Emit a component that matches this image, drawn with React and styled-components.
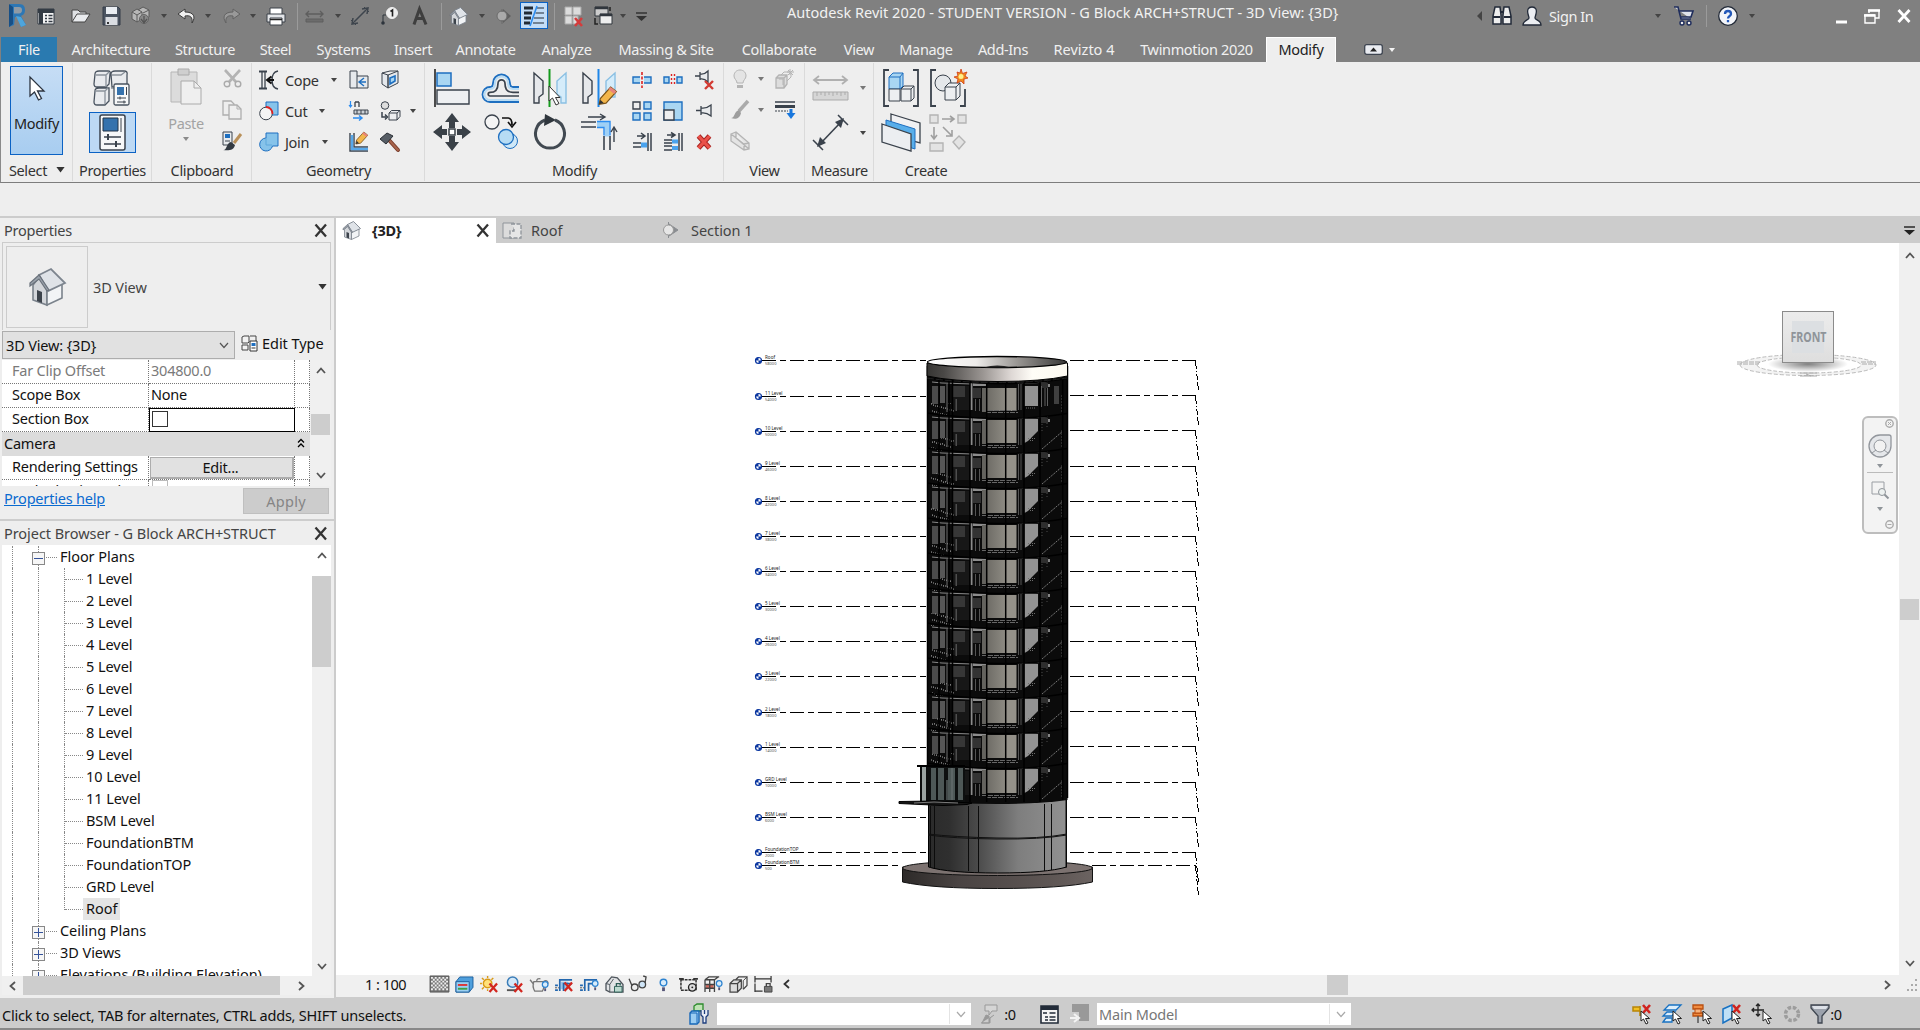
import React from 'react';
import styled, { createGlobalStyle, css } from 'styled-components';

const Global = createGlobalStyle`
  * { box-sizing: border-box; }
  body { margin: 0; background: #eee; overflow: hidden; }
  svg { display: block; flex: none; overflow: visible; }
  svg text { font-family: "Noto Sans", sans-serif; letter-spacing: 0; }
`;

/* ---------- shared ---------- */
const Shell = styled.div`
  width: 1920px; height: 1030px; display: flex; flex-direction: column;
  font-family: "Noto Sans", "Open Sans", sans-serif; font-size: 14.5px; letter-spacing: -0.35px;
  line-height: 20px; color: #333; background: #eee; white-space: nowrap;
`;
const Row = styled.div`display: flex; align-items: center;`;
const Cell = styled.div`
  width: ${p => p.$w}px; height: 100%; flex: none; display: flex; align-items: center; justify-content: center;
  margin-left: ${p => p.$ml || 0}px;
`;
const Gap = styled.div`flex: none; width: ${p => p.$w}px;`;
const VLine = styled.div`width: 1px; height: ${p => p.$h}px; background: ${p => p.$c || '#9b9b9b'};`;
const Ico = ({ w, h = w, vw = w, vh = h, children }) => (
  <svg width={w} height={h} viewBox={`0 0 ${vw} ${vh}`} fill="none">{children}</svg>
);
const Caret = ({ c = '#444', s = 6 }) => <Ico w={s} h={s / 2 + 1} vw={6} vh={4}><path d="M0 0h6L3 4z" fill={c} /></Ico>;
const XMark = () => <Ico w={13} h={13}><path d="M1.500 .5l10.500 12M12 .5L1.500 12.500" stroke="#333" strokeWidth="2.300" /></Ico>;
const Chevron = ({ r = 0, c = '#555', w = 1.800 }) => (
  <Ico w={10} h={10}><path d="M1 7l4-4.500 4 4.500" stroke={c} strokeWidth={w} transform={`rotate(${r} 5 5)`} /></Ico>
);

/* ---------- title bar ---------- */
const TitleBar = styled(Row)`height: 37px; background: #808080; color: #f2f2f2; padding: 0 0 5px 4px; align-items: stretch;`;
const Title = styled.div`width: 552px; margin-left: 133px; padding-top: 2px; letter-spacing: 0.02px;`;
const SignIn = styled.div`width: 62px; padding: 6px 0 0 5px; text-align: left; letter-spacing: -0.4px;`;
const ThinLines = styled.div`
  width: 28px; height: 27px; background: #c3ddf7; border: 1px solid #0b62c4; display: grid; place-items: center; margin: 2px 0 0 8px;
`;

const House = ({ s = 18 }) => (
  <Ico w={s} vw={36} vh={38}>
    <path d="M4 17v15l14 5V20L11 8z" fill="#d3d6da" stroke="#7a828b" strokeWidth="1.600" />
    <path d="M18 21v16l15-7V16z" fill="#f2f4f6" stroke="#7a828b" strokeWidth="1.600" />
    <path d="M10 7L22 1l14 14-17 8z" fill="#dfe3e8" stroke="#7d858f" strokeWidth="1.800" />
    <path d="M10 7L1 15v3l9-7 8 12 2-1z" fill="#9aa2ab" stroke="#69717b" strokeWidth="1.200" />
    <path d="M8 22l5 2v11l-5-2z" fill="#3c434b" />
  </Ico>
);
const RevitLogo = () => (
  <Ico w={18} h={24}>
    <path d="M2 0h9c5 0 6 3 6 6 0 4-2 5-4 6l5 9-5 2-4-10H7L6 21l-5 2z" fill="#2d77b5" />
    <path d="M6 3h5c2 0 3 1 3 3s-1 3.500-3 3.500H6z" fill="#8f9aa5" />
    <path d="M1 0l4 3v17l-4 3z" fill="#174f86" /><path d="M8 12l5 1 5 8-5 2z" fill="#4ea5dc" />
  </Ico>
);
const Cubes = ({ c = '#b7b7b7' }) => (
  <Ico w={20}><path d="M1 6l5-3 5 3v7l-5 3-5-3zM7 4l5-3 6 3v7l-5 3" fill={c} stroke="#5b5b5b" /><path d="M1 6l5 3 5-3M6 9v7M12 7l6-3" stroke="#5b5b5b" />
    <circle cx="13" cy="13" r="4.500" fill="#888" stroke="#666" /><path d="M13 10v6M10 13l3 4 3-4" stroke="#555" strokeWidth="1.300" /></Ico>
);

function QuickAccess() {
  return (
    <>
      <Cell $w={26}><RevitLogo /></Cell>
      <Cell $w={32}><Ico w={18} h={17}><path d="M1 1h16v15H1z" fill="#f4f4f4" stroke="#333b44" /><path d="M1 1h16v4H1z" fill="#333b44" /><path d="M4 5v11" stroke="#333b44" strokeWidth="4" /><path d="M8 7.500h2M8 10.500h2M8 13.500h2M11.500 7.500h4M11.500 10.500h4M11.500 13.500h4" stroke="#333b44" strokeWidth="1.500" /></Ico></Cell>
      <Cell $w={38}><Ico w={20} h={14}><path d="M1 13V1h6l2 2h6v3" fill="#dfe1e4" stroke="#444" /><path d="M1 13L6 5h13l-5 8z" fill="#e9ebee" stroke="#444" /></Ico></Cell>
      <Cell $w={22}><Ico w={19} h={20}><path d="M1 1h15l2 2v16H1z" fill="#4a5360" stroke="#343d49" /><path d="M4 1h11v7H4z" fill="#e9edf2" /><path d="M3.500 11h12v8h-12z" fill="#dadde2" /><path d="M5 16h2v2H5z" fill="#333" /></Ico></Cell>
      <Cell $w={38}><Cubes /></Cell>
      <Cell $w={8}><Caret /></Cell>
      <Cell $w={36}><Ico w={19} h={16}><path d="M8 1L1 6l7 5V8c5-1 8 1 7 7 4-6 2-11-7-11z" fill="#f0f0f0" stroke="#3b3b3b" /></Ico></Cell>
      <Cell $w={8}><Caret /></Cell>
      <Cell $w={38}><Ico w={19} h={16}><path d="M11 1l7 5-7 5V8c-5-1-8 1-7 7-4-6-2-11 7-11z" fill="#999" stroke="#636363" /></Ico></Cell>
      <Cell $w={6}><Caret /></Cell>
      <Cell $w={40}><Ico w={20} h={19}><path d="M4 1h12v7H4z" fill="#fff" stroke="#3b4048" /><path d="M1 7h18v8H1z" fill="#e4e6e9" stroke="#3b4048" /><path d="M4 11h12v7H4z" fill="#fff" stroke="#3b4048" /><path d="M4 12.500h12" stroke="#222" strokeWidth="1.500" /></Ico></Cell>
      <Cell $w={2}><VLine $h={27} /></Cell>
      <Cell $w={32}><Ico w={19} h={13}><path d="M1 4h17M4 1L1 4l3 3M15 1l3 3-3 3" stroke="#5e5e5e" strokeWidth="1.400" /><path d="M1 9h17v3H1z" fill="#6c6c6c" stroke="#5e5e5e" /></Ico></Cell>
      <Cell $w={16}><Caret /></Cell>
      <Cell $w={28}><Ico w={20}><path d="M4 16L16 4M3 12l-1 6 6-1M12 3l6-1-1 6" stroke="#3e454d" strokeWidth="1.500" /><path d="M1 14l5 5M14 1l5 5" stroke="#3e454d" /></Ico></Cell>
      <Cell $w={30}><Ico w={18} h={20}><circle cx="12" cy="7" r="5.500" fill="#eee" stroke="#f0f0f0" /><path d="M10.500 5.500L12.500 4v6.500" stroke="#222" strokeWidth="1.600" /><path d="M6 9H3v8" stroke="#2d343c" /><circle cx="3" cy="17" r="1.800" fill="#2d343c" /></Ico></Cell>
      <Cell $w={32}><Ico w={16} h={17}><path d="M2 16.500L7.500 1 14 16.500M4 10.500h7.500" stroke="#3e3e3e" strokeWidth="3" /></Ico></Cell>
      <Cell $w={10}><VLine $h={27} /></Cell>
      <Cell $w={24}><House s={19} /></Cell>
      <Cell $w={24}><Caret /></Cell>
      <Cell $w={18}><Ico w={18}><path d="M9 2l8 7-8 7z" fill="#5f5f5f" /><circle cx="8" cy="9" r="5" fill="#aaa" stroke="#6b6b6b" /><path d="M8 2v3M8 13v4" stroke="#6b6b6b" /></Ico></Cell>
      <ThinLines><Ico w={22} h={20}><path d="M1 2h9M1 7h8M1 12h7M1 17h6" stroke="#222b35" strokeWidth="3" /><path d="M14 2h7M12.500 7H21M11 12h10M10 17h11" stroke="#222b35" strokeWidth="1.200" /><path d="M14 0L7 20" stroke="#2b8cf0" strokeWidth="1.600" /></Ico></ThinLines>
      <Cell $w={12}><VLine $h={27} /></Cell>
      <Cell $w={28}><Ico w={20} h={21}><path d="M1 1h7v8H1zM9 1h8v8H9zM1 10h7v8H1zM9 10h5v8H9z" fill="#dcdcdc" stroke="#a9a9a9" /><path d="M11 12l7 8M18 12l-7 8" stroke="#d43c3c" strokeWidth="2.600" /></Ico></Cell>
      <Cell $w={30}><Ico w={20}><path d="M2 1h13v9H2z" fill="#ccc" stroke="#30363d" /><path d="M7 8h12v10H7z" fill="#eee" stroke="#30363d" /><path d="M2 2h13M7 9h12" stroke="#30363d" strokeWidth="2.500" /><path d="M2 12v6h3M17 1v4" stroke="#222" strokeWidth="1.500" /></Ico></Cell>
      <Cell $w={10}><Caret /></Cell>
      <Cell $w={26}><Ico w={11} h={9}><path d="M0 1h11" stroke="#333" strokeWidth="1.500" /><path d="M0 4h11L5.500 9z" fill="#333" /></Ico></Cell>
    </>
  );
}

/* ---------- tabs ---------- */
const Tabs = styled(Row)`height: 25px; background: #808080; color: #f0f0f0; padding-left: 1px; align-items: stretch;`;
const Tab = styled.div`
  width: ${p => p.$w}px; flex: none; text-align: center; padding-top: 2px; letter-spacing: ${p => p.$ls ?? -0.35}px;
  ${p => p.$file && css`background: #2a7ab0; margin-right: 2px;`}
  ${p => p.$active && css`background: #eee; color: #222; border: 1px solid #fff; border-bottom: 0; padding-top: 1px;`}
`;
const TABS = [['Architecture', 104], ['Structure', 84], ['Steel', 57], ['Systems', 79], ['Insert', 60], ['Annotate', 85], ['Analyze', 77], ['Massing & Site', 122], ['Collaborate', 104], ['View', 56], ['Manage', 78], ['Add-Ins', 76], ['Revizto 4', 86, 0], ['Twinmotion 2020', 139]];

/* ---------- ribbon ---------- */
const Ribbon = styled(Row)`height: 121px; border-bottom: 1px solid #7d7d7d; border-left: 1px solid #8a8a8a; background: #eee; align-items: stretch;`;
const Panel = styled.div`
  width: ${p => p.$w}px; flex: none; display: flex; flex-direction: column;
  ${p => !p.$last && css`background: linear-gradient(#dadada, #dadada) right 0 top 1px / 1px 118px no-repeat;`}
`;
const Body = styled.div`height: 97px; flex: none; display: flex; padding: ${p => p.$p || '0'};`;
const Label = styled.div`height: 22px; line-height: 22px; display: flex; justify-content: center; align-items: center; gap: 9px;`;
const Grid = styled.div`
  display: grid; grid-template-columns: ${p => p.$c}; grid-auto-rows: ${p => p.$r}px; align-content: start;
  justify-items: center; align-items: center; padding-top: ${p => p.$pt}px;
`;
const BigButton = styled.div`
  width: 53px; height: 89px; border: 1px solid #0b62c4; background: linear-gradient(#c6ddf5, #a8cdf0);
  display: flex; flex-direction: column; align-items: center; padding-top: 9px; gap: 12px; margin: 4px 0 0 9px; color: #222;
`;
const PropButton = styled.div`width: 47px; height: 41px; border: 1px solid #0b62c4; background: #bdd9f4; display: grid; place-items: center;`;
const PasteCol = styled.div`
  width: 58px; padding-top: 6px; display: flex; flex-direction: column; align-items: center; color: #a3a3a3; gap: 4px;
  & > svg:first-child { margin-bottom: 4px; }
`;
const CmdRow = styled(Row)`width: 100%; gap: ${p => p.$g}px; padding-left: 4px;`;

const Cursor = ({ w = 16, h = 25 }) => <Ico w={w} h={h} vw={16} vh={25}><path d="M1 1v19l4.500-4 4 8 3-1.500-4-7.500H15z" fill="#fff" stroke="#2c3440" strokeWidth="1.300" /></Ico>;
const Pencil = ({ x = 0, y = 0, s = 1 }) => (
  <g transform={`translate(${x} ${y}) scale(${s})`}><path d="M1 15l1-5L11 0l5 4-9 10z" fill="#f3b64b" stroke="#7a5217" /><path d="M11 0l5 4-2 2-5-4z" fill="#e8837a" /><path d="M1 15l1-4 3 3z" fill="#333" /></g>
);
const B = '#1e6fc0', LB = '#a9d6f2', K = '#3a424c', G = '#b4b4b4';

const I = {
  typeProps: <Ico w={38}><g fill="#e9ebee" stroke="#4a5460" strokeWidth="1.300"><path d="M2 5q0-3 4-3h9q3 0 2 3l-1 10-3 3H4q-3 0-3-3zM18 5q0-3 4-3h9q4 0 3 4v9l-4 3H19zM2 22q0-3 4-3h10v13l-4 4H4q-3 0-3-3z" /><path d="M3 6h10l3-3M19 6h9l4-3M13 6v12M2 22h10l3-3M12 22v13M18 19h14" fill="none" stroke="#8a929b" /><rect x="21" y="15" width="15" height="21" rx="1.500" fill="#f7f8f9" /></g><path d="M24 18h7v8h-7z" fill="#3572ad" /><path d="M33.500 18v8" stroke={K} /><path d="M24 29h9M24 33h9M27 27.500v3M31 31.500v3" stroke={K} /></Ico>,
  props: <Ico w={27} h={37}><rect x="1" y="1" width="25" height="35" rx="2" fill="#f6f7f8" stroke={K} strokeWidth="1.500" /><path d="M4 4h15v13H4z" fill="#3572ad" stroke="#234" /><path d="M22 4v14" stroke={K} /><path d="M5 23h17M5 30h17" stroke={K} strokeWidth="1.600" /><path d="M9 20v6M17 27v6" stroke={K} strokeWidth="2" /></Ico>,
  paste: <Ico w={32} h={37}><path d="M1 4h26v30H1z" fill="#dcdcdc" stroke="#b6b6b6" /><path d="M8 1h11v6H8z" fill="#cfcfcf" stroke="#aaa" /><path d="M11 13h13l7 7v16H11z" fill="#efefef" stroke="#aaa" /><path d="M24 13v7h7" stroke="#aaa" /></Ico>,
  cut: <Ico w={19} h={19}><path d="M2 1l11 12M17 1L6 13" stroke="#b3b3b3" strokeWidth="2.600" /><circle cx="4" cy="15" r="2.800" stroke="#aaa" strokeWidth="1.400" /><circle cx="15" cy="15" r="2.800" stroke="#aaa" strokeWidth="1.400" /></Ico>,
  copy: <Ico w={20} h={20}><path d="M1 1h8l3 3v11H1z" fill="#eee" stroke="#aeaeae" strokeWidth="1.300" /><path d="M7 5h8l4 4v10H7z" fill="#eee" stroke="#aeaeae" strokeWidth="1.300" /><path d="M15 5v4h4" stroke="#aeaeae" /></Ico>,
  match: <Ico w={20} h={20}><path d="M1 1h9v13H1z" fill="#e8ebee" stroke={K} /><path d="M3 3h5v4H3z" fill={B} /><path d="M3 10h5" stroke={K} /><path d="M19 3l-7 9" stroke="#b9905a" strokeWidth="3" /><path d="M1 19c4 1 3-7 8-8l4 3c-1 5-6 6-12 5z" fill="#333a42" /></Ico>,
  cope: <Ico w={20} h={20}><path d="M0 1.500h8M0 18.500h8" stroke={K} strokeWidth="2" /><path d="M3 2v16M6 2v16" stroke={K} strokeWidth="1.300" /><path d="M19 1c-5 1-6 4-6 9s1 8 6 9" stroke={K} strokeWidth="1.600" /><path d="M15 10H9m3.500-3.500L8 10l4.500 3.500" stroke="#111" strokeWidth="2" /></Ico>,
  gcut: <Ico w={20} h={20}><path d="M7 1h12v13H7z" fill="#86c3ea" stroke={B} /><circle cx="7" cy="12.500" r="6.300" fill="#f4f4f4" stroke={K} /><path d="M7 6a6.500 6.500 0 0 1 6.500 7" stroke="#e02020" strokeWidth="1.800" /></Ico>,
  join: <Ico w={20} h={20}><path d="M7 1h12v13h-5.500A6.500 6.500 0 1 1 7 6z" fill="#86c3ea" stroke={B} /><path d="M7 6v7h6" stroke="#5ea8db" /></Ico>,
  g1: <Ico w={20}><path d="M1 1h7v5h11v12H1z" fill="#e6e9ec" stroke={K} /><path d="M8 6v12" stroke={K} /><path d="M15 8l-5 4 5 4M10 12h7" stroke={B} strokeWidth="1.400" /></Ico>,
  g2: <Ico w={18} h={20}><path d="M1 3l6 2v13l-6-4zM7 5l10-4v12L7 18z" fill="#e4e8ec" stroke={K} /><path d="M1 3l8-2 8 0" stroke={K} /><path d="M9 8l5-2v5l-5 3z" fill={LB} stroke={B} strokeWidth="1.600" /></Ico>,
  g3: <Ico w={20}><path d="M1.500 0v6m-1.500-2l1.500 2L3 4" stroke="#2b8cf0" strokeWidth="1.200" /><path d="M6 1v5M10 1v5M6 1h4" stroke={K} strokeWidth="1.300" /><path d="M5 9h14v4H5z" fill="#ccd1d6" stroke={K} /><path d="M8 9v4M12 9v4M16 9v4" stroke={K} /><path d="M4 17h9m-3-2.500l3 2.500-3 2.500" stroke="#2b8cf0" strokeWidth="1.500" /></Ico>,
  g4: <Ico w={21} h={20}><circle cx="5" cy="4.500" r="3.800" fill="#ddd" stroke={K} /><path d="M9 12l2.500-2.500H20v6L17 19H9zM9 12h8v7M17 12l3-2.500" fill="#eceef0" stroke={K} /><path d="M2 11v5h4M5 13.500L7.500 16 5 18.500" stroke={K} strokeWidth="1.500" /></Ico>,
  g5: <Ico w={20}><path d="M1 1v18h18M5 1v14h14" stroke={K} strokeWidth="1.400" /><path d="M3 3v14h16" stroke="#59a9ea" strokeWidth="2.500" /><Pencil x={6} y={0} s={0.800} /></Ico>,
  hammer: <Ico w={20}><path d="M9 8l9 10" stroke="#7a3d2c" strokeWidth="4" strokeLinecap="round" /><path d="M9 8l9 10" stroke="#a8654c" strokeWidth="2" strokeLinecap="round" /><path d="M0 7l7-6 6 3-7 8z" fill="#565d65" stroke="#2a2f35" /></Ico>,
  align: <Ico w={36} h={38}><path d="M1 0v38" stroke="#222" strokeWidth="1.600" /><path d="M3 4h14v13H3z" fill={LB} stroke={B} strokeWidth="1.500" /><path d="M3 21h32v14H3z" fill="#eef0f2" stroke={K} strokeWidth="1.400" /></Ico>,
  offset: <Ico w={38} h={34}><path d="M37 31H8a7.500 7.500 0 0 1 0-15c2 0 3-1 3-4a8.500 8.500 0 0 1 17 0c0 3 1 4 3 4h6" stroke={B} strokeWidth="1.800" /><path d="M37 29H8a5.500 5.500 0 0 1 0-11c3 0 5-2 5-6a6.500 6.500 0 0 1 13 0c0 4 2 6 5 6h6" stroke="#b9dcf3" strokeWidth="2" /><path d="M37 25H8a1.800 1.800 0 0 1 0-3.600c5 0 8-3 8-9a3.500 3.500 0 0 1 7 0c0 6 3 9 8 9h6" stroke={K} strokeWidth="1.700" /></Ico>,
  mirrorPick: <Ico w={36} h={38}><path d="M2 4l9 8v13l-4 3v6H2z" fill="#e6e8eb" stroke={K} strokeWidth="1.400" /><path d="M34 4l-9 8v13l4 3v6h5z" fill="#d5ecfa" stroke="#8bc0e3" strokeWidth="1.400" /><path d="M17.500 0v38" stroke="#149a1c" strokeWidth="2" /><path d="M17 17v15l3.500-3 3.500 7 3-1.500-3.500-6H28z" fill="#fff" stroke="#333" /></Ico>,
  mirrorDraw: <Ico w={36} h={38}><path d="M2 4l9 8v13l-4 3v6H2z" fill="#e6e8eb" stroke={K} strokeWidth="1.400" /><path d="M34 4l-9 8v13l4 3h5z" fill="#d5ecfa" stroke="#8bc0e3" strokeWidth="1.400" /><path d="M17.500 0v38" stroke="#1f86e8" strokeWidth="2" /><Pencil x={17} y={18} s={1.150} /></Ico>,
  move: <Ico w={38} h={38}><path d="M19 0l7 9h-4v6h-6V9h-4zM19 38l7-9h-4v-6h-6v6h-4zM0 19l9-7v4h5v6H9v4zM38 19l-9-7v4h-5v6h5v4z" fill="#3a4148" /><path d="M16 16h6v6h-6z" fill="#fff" stroke="#3a4148" strokeWidth="1.500" /></Ico>,
  copyBig: <Ico w={34} h={36}><circle cx="8" cy="8" r="7" fill="#f4f4f4" stroke={K} strokeWidth="1.300" /><circle cx="26" cy="27" r="7.500" fill="#cfe8f8" stroke={B} /><circle cx="22" cy="23" r="7.500" fill="#b7dcf4" stroke={B} strokeWidth="1.300" /><path d="M18 4h6q4 0 4 7m-4-3l4 5 4-5" stroke="#111" strokeWidth="1.700" /></Ico>,
  rotate: <Ico w={34} h={36}><path d="M22 6a14.500 14.500 0 1 1-10 0" stroke="#414951" strokeWidth="3" /><path d="M12 0l11 6-12 6z" fill="#2f363d" /></Ico>,
  trim: <Ico w={37} h={37}><path d="M1 8h15M1 13h15" stroke={K} strokeWidth="1.400" /><path d="M17 10.500h10v12" stroke="#9fd0f5" strokeWidth="5" /><path d="M17 7.500h13v14M17 13.500h7v8" stroke="#2b8cf0" strokeWidth="1.400" /><path d="M24 22v14M30 22v14" stroke={K} strokeWidth="1.600" /><path d="M8 3h16m-4-3l5 3-5 3M34 28V14m-3 4l3-5 3 5" stroke={K} strokeWidth="1.400" /></Ico>,
  split: <Ico w={20} h={16}><path d="M1 5h18v6H1z" fill={LB} stroke={B} strokeWidth="1.400" /><path d="M10 0v16" stroke="#eee" strokeWidth="4" /><path d="M10 0v16" stroke="#d22" strokeWidth="1.600" strokeDasharray="3 1.500" /></Ico>,
  splitGap: <Ico w={20} h={16}><path d="M1 5h5v6H1zM14 5h5v6h-5z" fill={LB} stroke={B} strokeWidth="1.400" /><path d="M8.500 2v12M11.500 2v12" stroke="#d22" strokeWidth="1.400" strokeDasharray="2 2" /></Ico>,
  unpin: <Ico w={20}><path d="M1 6h5M6 2v8M6 4q4 1 8-3v11q-4-4-8-3" stroke={K} strokeWidth="1.300" fill="#e9ebed" /><path d="M11 11l8 8M19 11l-8 8" stroke="#d33a32" strokeWidth="2.400" /></Ico>,
  pin: <Ico w={18} h={16}><path d="M1 7.500h5M6 3v9M6 5q5 1 10-3v11q-5-4-10-3" stroke={K} strokeWidth="1.300" fill="#e9ebed" /></Ico>,
  array: <Ico w={20}><path d="M1 1h7v7H1z" stroke={K} fill="#eee" strokeWidth="1.400" /><path d="M12 1h7v7h-7zM1 12h7v7H1zM12 12h7v7h-7z" fill={LB} stroke={B} strokeWidth="1.400" /></Ico>,
  scale: <Ico w={20}><path d="M1 1h18v18H1z" fill={LB} stroke={B} strokeWidth="1.400" /><path d="M1 9h10v10H1z" fill="#eee" stroke={K} strokeWidth="1.400" /></Ico>,
  trim1: <Ico w={20}><path d="M1 11h8M1 15h8" stroke={K} strokeWidth="1.500" /><path d="M9 13h6" stroke="#4aa3ee" strokeWidth="5" /><path d="M16 1v18M19 1v18M5 4h7m-3-3l4 3-4 3" stroke={K} strokeWidth="1.500" /></Ico>,
  trim2: <Ico w={20}><path d="M1 8h8M1 11h8M1 14h8M1 18h8" stroke={K} strokeWidth="1.500" /><path d="M9 9.500h6M9 16h6" stroke="#4aa3ee" strokeWidth="4" /><path d="M16 1v18M19 1v18M4 3h7m-3-2.500l4 2.500-4 2.500" stroke={K} strokeWidth="1.500" /></Ico>,
  del: <Ico w={16} h={16}><path d="M2.500 2L13.500 14M13.500 2L2.500 14" stroke="#a6221f" strokeWidth="5" /><path d="M2.500 2L13.500 14M13.500 2L2.500 14" stroke="#ea5149" strokeWidth="3.200" /></Ico>,
  bulb: <Ico w={16} h={20}><path d="M8 1c4 0 6 3 6 6s-3 4-3 7H5c0-3-3-4-3-7s2-6 6-6z" fill="#e4e4e4" stroke={G} /><path d="M5 16h6v3H5z" fill={G} /></Ico>,
  dispBox: <Ico w={20}><path d="M1 9l3-3h8v9l-3 4H1zM1 9h8v10M9 9l3-3" fill="#ddd" stroke={G} strokeWidth="1.300" /><path d="M6 6l3-3h5M12 12l4-4V4M15 0v6M12 3h7M13 1l5 5M18 1l-5 5M4 10h4v6" stroke={G} /></Ico>,
  brush: <Ico w={20}><path d="M18 1L9 11" stroke="#aaa" strokeWidth="3.500" /><path d="M1 18c4 0 3-7 8-8l2 3c-1 5-5 7-10 5z" fill="#9d9d9d" /></Ico>,
  lines: <Ico w={20} h={19}><path d="M0 2h20" stroke={K} strokeWidth="1.500" /><path d="M0 6.500h20" stroke={K} strokeWidth="3" /><path d="M0 11h13" stroke={K} strokeDasharray="2 1" /><path d="M16 9v5" stroke="#1877dd" strokeWidth="3" /><path d="M11.500 13h9L16 19z" fill="#1877dd" /></Ico>,
  box: <Ico w={20}><path d="M1 3l5-2 13 11v6l-5 1L1 10zM1 3l13 10v6M14 13l5-1M6 1v6l13 11" stroke={G} fill="#e4e4e4" strokeWidth="1.300" /></Ico>,
  ruler: <Ico w={37} h={30}><path d="M2 7h33M7 3L2 7l5 4M30 3l5 4-5 4" stroke="#b0b0b0" strokeWidth="1.800" /><path d="M1 19h35v8H1z" fill="#d6d6d6" stroke="#ababab" /><path d="M5 19v4M9 19v3M13 19v4M17 19v3M21 19v4M25 19v3M29 19v4M33 19v3" stroke="#ababab" /></Ico>,
  measure: <Ico w={37} h={37}><path d="M8 30L29 8" stroke={K} strokeWidth="1.600" /><path d="M5 33l3-10 6 6zM32 4l-3 10-6-6z" fill={K} /><path d="M1 26l10 10M26 1l10 10" stroke={K} strokeWidth="1.500" /></Ico>,
  group: <Ico w={38} h={38}><path d="M7 1H2v36h5M31 1h5v36h-5" stroke={K} strokeWidth="1.800" /><path d="M7 8l4-4h10v13l-3 3H7z" fill={LB} stroke={B} /><path d="M7 8h11v12M18 8l3-4" stroke={B} /><path d="M7 20h11v12H7zM19 20l3-3h10v12l-3 3H19zM19 20h10v12M29 20l3-3" fill="#edeff1" stroke={K} /></Ico>,
  similar: <Ico w={38} h={38}><path d="M7 1H2v36h5M31 37h5V20" stroke={K} strokeWidth="1.800" /><circle cx="14" cy="14" r="8" fill="#e4e7ea" stroke={K} /><path d="M16 18l4-4h11v13l-4 4H16zM16 18h11v13M27 18l4-4" fill="#edeff1" stroke={K} /><path d="M32 0l1.500 4.500L38 3l-2 4 3 2-4 1v5l-3-3-4 2 1-4-4-2 4-1-1-4 3 1z" fill="#f08a1c" stroke="#cf3b15" strokeWidth=".8" /><circle cx="32" cy="7.500" r="2.500" fill="#fff08a" /></Ico>,
  assembly: <Ico w={40} h={38}><path d="M10 0l29 9v20l-29-8z" fill="#f0f1f3" stroke={K} strokeWidth="1.300" /><path d="M5 6l29 9v20L5 26z" fill="#58aeea" stroke={B} /><path d="M1 10l29 10v17L1 28z" fill="#eceef1" stroke={K} strokeWidth="1.300" /></Ico>,
  parts: <Ico w={38} h={38}><g stroke={G} strokeWidth="1.400"><path d="M1 1h8v8H1zM29 1h8v8h-8zM1 29h13v8H1zM30 22l6 6-6 7-6-7z" fill="#e3e3e3" /><path d="M13 5h12m-4-3l4 3-4 3M5 13v12m-3-4l3 4 3-4M14 13l9 9m0-6v6h-6" stroke="#9f9f9f" strokeWidth="1.600" /></g></Ico>,
};

function RibbonPanels() {
  return (
    <Ribbon>
      <Panel $w={72}>
        <Body><BigButton><Cursor /><span>Modify</span></BigButton></Body>
        <Label>Select <Caret c="#333" s={9} /></Label>
      </Panel>
      <Panel $w={79}>
        <Body><Grid $c="78px" $r={44} $pt={4}>{I.typeProps}<PropButton>{I.props}</PropButton></Grid></Body>
        <Label>Properties</Label>
      </Panel>
      <Panel $w={100}>
        <Body $p="0 0 0 5px">
          <PasteCol>{I.paste}<span>Paste</span><Caret c="#8a8a8a" /></PasteCol>
          <Grid $c="34px" $r={31} $pt={1}>{I.cut}{I.copy}{I.match}</Grid>
        </Body>
        <Label>Clipboard</Label>
      </Panel>
      <Panel $w={173}>
        <Body $p="0 0 0 5px">
          <Grid $c="24px 62px 31px 32px 14px" $r={31} $pt={2}>
            {I.cope}<CmdRow $g={12}>Cope <Caret /></CmdRow>{I.g1}{I.g2}<span />
            {I.gcut}<CmdRow $g={12}>Cut <Caret /></CmdRow>{I.g3}{I.g4}<Caret />
            {I.join}<CmdRow $g={13}>Join <Caret /></CmdRow>{I.g5}{I.hammer}<span />
          </Grid>
        </Body>
        <Label>Geometry</Label>
      </Panel>
      <Panel $w={299}>
        <Body $p="0 0 0 2px">
          <Grid $c="49px 49px 49px 49px" $r={44} $pt={4}>
            {I.align}{I.offset}{I.mirrorPick}{I.mirrorDraw}{I.move}{I.copyBig}{I.rotate}{I.trim}
          </Grid>
          <Gap $w={3} />
          <Grid $c="31px 31px 31px" $r={31} $pt={2}>
            {I.split}{I.splitGap}{I.unpin}{I.array}{I.scale}{I.pin}{I.trim1}{I.trim2}{I.del}
          </Grid>
        </Body>
        <Label>Modify</Label>
      </Panel>
      <Panel $w={81}>
        <Body $p="0 0 0 3px">
          <Grid $c="26px 16px 32px" $r={31} $pt={1}>
            {I.bulb}<Caret c="#777" />{I.dispBox}{I.brush}<Caret c="#777" />{I.lines}{I.box}
          </Grid>
        </Body>
        <Label>View</Label>
      </Panel>
      <Panel $w={69}>
        <Body $p="0 0 0 2px"><Grid $c="46px 19px" $r={45} $pt={3}>{I.ruler}<Caret c="#777" />{I.measure}<Caret /></Grid></Body>
        <Label>Measure</Label>
      </Panel>
      <Panel $w={104} $last>
        <Body $p="0 0 0 2px"><Grid $c="49px 46px" $r={45} $pt={3}>{I.group}{I.similar}{I.assembly}{I.parts}</Grid></Body>
        <Label>Create</Label>
      </Panel>
    </Ribbon>
  );
}

/* ---------- side panels ---------- */
const OptionsBar = styled.div`height: 33px; background: #eee;`;
const Main = styled.div`height: 782px; display: flex; border-top: 2px solid #ccc;`;
const Side = styled.div`width: 336px; border-right: 2px solid #ccc; display: flex; flex-direction: column; background: #eee;`;
const PaneTitle = styled(Row)`height: 24px; flex: none; justify-content: space-between; padding: 0 7px 0 4px; color: #444; letter-spacing: ${p => p.$ls ?? -0.25}px;`;
const TypeBox = styled(Row)`height: 88px; margin: 0 3px 0 2px; border: 1px solid #ccc; border-bottom: 0; padding: 0 3px 0 3px;`;
const Thumb = styled.div`width: 82px; height: 82px; border: 1px solid #ccc; display: grid; place-items: center;`;
const TypeName = styled.div`flex: 1; padding-left: 5px; letter-spacing: -0.1px; color: #444;`;
const Instance = styled(Row)`height: 30px; padding: 0 0 1px 2px; color: #111; letter-spacing: 0;`;
const Combo = styled(Row)`width: 233px; height: 28px; background: #e1e1e1; border: 1px solid #adadad; justify-content: space-between; padding: 0 5px 1px 3px; margin: 1px 6px 0 0; letter-spacing: -0.15px;`;
const EditType = styled(Row)`gap: 4px; height: 28px; padding-bottom: 2px; align-self: flex-start; letter-spacing: -0.05px;`;
const PropWrap = styled.div`height: 126px; margin-left: 2px; display: flex; overflow: hidden;`;
const PropTable = styled.div`
  width: 308px; background: #fff; display: grid; grid-template-columns: 147px 146px 15px;
  grid-template-rows: 24px 24px 24px 24px 24px 24px; color: #111; letter-spacing: -0.22px; overflow: hidden;
`;
const PCell = styled.div`
  border-right: 1px dotted #777; border-bottom: 1px dotted #777; padding: 0 0 0 ${p => p.$pl ?? 10}px; line-height: 20px; color: ${p => p.$dim ? '#7a7a7a' : '#111'};
  ${p => p.$focus && css`border: 1px solid #000; padding: 2px;`}
`;
const GroupHead = styled(Row)`grid-column: 1 / 4; background: #dcdcdc; padding: 0 5px 2px 2px; justify-content: space-between; width: 308px;`;
const CheckBox = styled.div`width: 16px; height: 16px; border: 1px solid ${p => p.$c || '#333'}; background: #fff;`;
const EditBtn = styled.div`height: 22px; background: #e1e1e1; border: 1px solid #adadad; border-right-width: 2px; border-bottom-width: 2px; text-align: center; line-height: 19px; margin: 1px 0 0 1px; padding-right: 2px;`;
const VScroll = styled.div`width: ${p => p.$w}px; background: ${p => p.$bg || '#f0f0f0'}; display: flex; flex-direction: column; align-items: center;`;
const Arrow = styled.div`height: ${p => p.$h}px; width: 100%; display: grid; place-items: center; padding-bottom: ${p => p.$pb || 0}px; background: ${p => p.$bg || 'transparent'};`;
const Knob = styled.div`width: ${p => p.$w}px; height: ${p => p.$h}px; background: #cdcdcd; flex: none;`;
const Help = styled(Row)`height: 33px; padding: 0 5px 5px 4px; justify-content: space-between; color: #0a6bd0; letter-spacing: -0.2px;`;
const Link = styled.span`text-decoration: underline; padding-bottom: 5px;`;
const Apply = styled.div`width: 86px; height: 26px; background: #ccc; border: 1px solid #bfbfbf; color: #858585; text-align: center; line-height: 25px; letter-spacing: 0.3px; margin-top: 2px;`;
const TreeWrap = styled.div`display: flex; height: 431px; padding-left: 2px;`;
const Tree = styled.div`width: 310px; overflow: hidden; color: #111; letter-spacing: -0.05px; padding-top: 1px; background: #fff;`;
const Node = styled.div`height: 22px; display: flex; align-items: stretch;`;
const Rail = styled.div`width: ${p => p.$w}px; flex: none; margin-left: ${p => p.$ml || 0}px; border-left: 1px dotted #888; height: ${p => p.$half ? 12 : 22}px;`;
const Dash = styled.div`width: ${p => p.$w}px; flex: none; border-bottom: 1px dotted #888; height: 12px; margin-right: 3px;`;
const NodeText = styled.span`line-height: 21px; height: 22px; ${p => p.$sel && css`background: #e4e4e4; margin-left: -3px; padding: 0 3px;`}`;
const Box = styled.div`
  width: 13px; height: 13px; margin: 6px 0 0 -7px; border: 1px solid #888; background: #f6f6f6; display: grid; place-items: center; flex: none;
`;
const HScroll = styled(Row)`height: 19px; margin-left: 2px; width: 329px; background: #f0f0f0;`;
const LEVELS = ['1 Level', '2 Level', '3 Level', '4 Level', '5 Level', '6 Level', '7 Level', '8 Level', '9 Level', '10 Level', '11 Level', 'BSM Level', 'FoundationBTM', 'FoundationTOP', 'GRD Level', 'Roof'];

const Branch = ({ open, label }) => (
  <Node>
    <Rail $w={26} $ml={10} /><Rail $w={0} />
    <Box><Ico w={9}><path d={open ? 'M0 4.500h9' : 'M0 4.500h9M4.500 0v9'} stroke="#34529a" /></Ico></Box>
    <Gap $w={1} /><Dash $w={11} /><NodeText>{label}</NodeText>
  </Node>
);

function SidePanels() {
  return (
    <Side>
      <PaneTitle><span>Properties</span><XMark /></PaneTitle>
      <TypeBox><Thumb><House s={38} /></Thumb><TypeName>3D View</TypeName><Caret c="#333" s={9} /></TypeBox>
      <Instance>
        <Combo><span>3D View: {'{3D}'}</span><Chevron r={180} w={1.200} /></Combo>
        <EditType>
          <Ico w={17} h={17}><path d="M1 2l2-1h5v6l-1 1H1zM9 1h6v5M1 10h6v5H1z" fill="#f2f2f2" stroke="#444" /><path d="M9 6h7v10H9z" fill="#fff" stroke="#333" /><path d="M10.500 8h4v3h-4z" fill={B} /><path d="M10.500 13h4" stroke="#333" /></Ico>
          <span>Edit Type</span>
        </EditType>
      </Instance>
      <PropWrap>
        <PropTable>
          <PCell $dim>Far Clip Offset</PCell><PCell $pl={2} $dim>304800.0</PCell><PCell />
          <PCell>Scope Box</PCell><PCell $pl={2}>None</PCell><PCell />
          <PCell>Section Box</PCell><PCell $focus><CheckBox /></PCell><PCell />
          <GroupHead>Camera<Ico w={8} h={10}><path d="M1 4.500L4 1.500l3 3M1 9L4 6l3 3" stroke="#000" strokeWidth="1.300" /></Ico></GroupHead>
          <PCell>Rendering Settings</PCell><PCell $pl={0}><EditBtn>Edit...</EditBtn></PCell><PCell />
          <PCell>Locked Orientation</PCell><PCell $pl={3}><CheckBox $c="#bbb" /></PCell><PCell />
        </PropTable>
        <VScroll $w={21}><Arrow $h={22}><Chevron /></Arrow><Arrow $h={32} /><Knob $w={19} $h={21} /><Arrow $h={30} /><Arrow $h={19}><Chevron r={180} /></Arrow></VScroll>
      </PropWrap>
      <Help><Link>Properties help</Link><Apply>Apply</Apply></Help>
      <Knob $w={334} $h={2} />
      <PaneTitle $ls={-0.05}><span>Project Browser - G Block ARCH+STRUCT</span><XMark /></PaneTitle>
      <TreeWrap>
        <Tree>
          <Branch open label="Floor Plans" />
          {LEVELS.map((l, i) => (
            <Node key={l}>
              <Rail $w={26} $ml={10} /><Rail $w={26} /><Rail $w={0} $half={i === LEVELS.length - 1} />
              <Dash $w={18} /><NodeText $sel={l === 'Roof'}>{l}</NodeText>
            </Node>
          ))}
          <Branch label="Ceiling Plans" />
          <Branch label="3D Views" />
          <Branch label="Elevations (Building Elevation)" />
        </Tree>
        <VScroll $w={19}><Arrow $h={31} $pb={9} $bg="#fff"><Chevron /></Arrow><Knob $w={19} $h={91} /><Arrow $h={289} /><Arrow $h={20}><Chevron r={180} /></Arrow></VScroll>
      </TreeWrap>
      <HScroll><Cell $w={21}><Chevron r={-90} /></Cell><Knob $w={257} $h={19} /><Cell $w={42}><Chevron r={90} /></Cell></HScroll>
    </Side>
  );
}

/* ---------- document area ---------- */
const Doc = styled.div`width: 1584px; display: flex; flex-direction: column; background: #fff;`;
const DocTabs = styled(Row)`height: 25px; background: #ccc; align-items: stretch; color: #444;`;
const DocTab = styled(Row)`
  width: 160px; padding: 0 7px 1px 6px; gap: ${p => p.$g}px; letter-spacing: -0.05px;
  ${p => p.$active && css`background: #fff; font-weight: 700; color: #222; letter-spacing: -0.3px;`}
  & > svg:last-child:not(:first-child) { margin-left: auto; }
`;
const TabMenu = styled.div`margin-left: auto; padding: 8px 5px 0 0;`;
const View = styled.div`height: 732px; display: flex;`;
const Stage = styled.div`width: 1563px; height: 732px; position: relative; background: #fff;`;
const Scene = styled.svg`position: absolute; left: 0; top: 0;`;
const NavBar = styled.div`
  position: absolute; left: 1526px; top: 173px; width: 36px; height: 118px; border: 2px solid #bdbdbd; border-radius: 6px;
  background: #f3f3f3; display: flex; flex-direction: column; align-items: center; padding: 1px 0 3px;
`;
const NavEnd = styled.div`align-self: flex-end; padding-right: 2px; ${p => p.$bottom && css`margin-top: 2px;`}`;
const NavRule = styled.div`width: 26px; height: 1px; background: #bbb; margin: 4px 0 8px;`;

const levels = [
  [360, 'Roof', '58000'], [396, '11 Level', '54000'], [431, '10 Level', '50000'], [466, '9 Level', '46000'],
  [501, '8 Level', '42000'], [536, '7 Level', '38000'], [571, '6 Level', '34000'], [606, '5 Level', '30000'],
  [641, '4 Level', '26000'], [676, '3 Level', '22000'], [712, '2 Level', '18000'], [747, '1 Level', '14000'],
  [782, 'GRD Level', '10000'], [817, 'BSM Level', '6000'], [852, 'FoundationTOP', '2000'], [865, 'FoundationBTM', '500'],
];

const Floor = ({ y, i }) => {
  const core = i === 0 ? y + 5 : y + 2;
  const dots = [];
  for (let k = 0; k < 46; k++) {
    const a = (k * 37 + i * 11) % 23, b = (k * 17 + i * 5) % 13;
    dots.push(<path key={k} d={`M${931 + a} ${y + 20.500 + b}h1`} stroke={k % 3 ? '#555' : '#777'} />);
  }
  return (
    <g>
      <rect x="932" y={y + 3} width="6.500" height="18" fill="#4b4b4b" />
      <rect x="940" y={y + 3} width="5" height="17" fill="#565656" />
      <rect x="946" y={y + 1} width="2" height="28" fill="#3c3c3c" />
      <rect x="953" y={y + 3} width="16" height="24" fill="#171717" />
      <rect x="953" y={y + 3} width="12" height="11" fill="#373737" />
      <rect x="955.500" y={y + 16} width="1.500" height="12" fill="#4e4e4e" />
      <rect x="970" y={y} width="2.500" height="27" fill="#8b8b8b" />
      <rect x="973" y={y} width="13" height="3" fill="#8d8d8d" />
      <rect x="973" y={y + 5} width="8" height="10" fill="#333" />
      <path d={`M975.500 ${y + 16}v12M979.500 ${y + 16}v12`} stroke="#555" />
      <rect x="982" y={core} width="5" height="24" fill="#64635e" />
      <rect x="987" y={core} width="18" height={23} fill="url(#core1)" />
      <rect x="1006" y={core} width="10.500" height={23} fill="#949189" />
      <path d={`M1018.500 ${y + 1}v26M1021 ${y + 1}v26`} stroke="#545454" />
      <path d={i ? `M1024.500 ${y + 1}h13.500v12l-5 5-5 5-3.500 2z` : `M1024.500 ${y + 3}h13.500v20h-13.500z`} fill="#929292" />
      <path d={i ? `M1028 ${y + 20.500}h7M1030 ${y + 22.500}h4` : `M1026 ${y + 25}h10`} stroke="#6d6d6d" strokeDasharray="1 1" />
      <rect x="1041" y={y} width="7" height="5" fill="#2e2e2e" /><rect x="1048" y={y + 1} width="2" height="3" fill="#858585" />
      {i ? <path d={`M1042 ${y + 31}L1063 ${y + 13}`} stroke="#777" strokeDasharray="2 1" />
        : <path d={`M1041.500 ${y + 3}v21M1045 ${y + 5}v18M1047.500 ${y + 5}v18`} stroke="#606060" />}
      {i ? <path d={`M1042 ${y + 6}v9M1047 ${y + 5}v6`} stroke="#4d4d4d" strokeDasharray="1 2" /> : <rect x="1054" y={y + 3} width="5" height="18" fill="#3f3f3f" />}
      <path d={`M1062 ${y + 12}v18`} stroke="#555" strokeDasharray="2 1" />
      <path d={`M982 ${y + 27.500}h34M986 ${y + 29.500}h32`} stroke="#666" strokeDasharray="5 1" />
      {dots}
      <path d={`M932 ${y - 1}l10 1 30 1M974 ${y + .5}h45l20-1 9-1`} stroke="#888" />
      <path d={`M927 ${y - 5}q32 5 70 5.500t70-5`} stroke="#000" strokeWidth="1.500" />
    </g>
  );
};

const Tower = () => (
  <>
    <defs>
      <linearGradient id="rim"><stop offset="0" stopColor="#363533" /><stop offset=".12" stopColor="#4a4846" /><stop offset=".4" stopColor="#9b9693" /><stop offset=".6" stopColor="#ded8d5" /><stop offset=".75" stopColor="#fffdf7" /><stop offset="1" stopColor="#fdfaf1" /></linearGradient>
      <linearGradient id="lid"><stop offset="0" stopColor="#fff" /><stop offset=".35" stopColor="#eeecea" /><stop offset=".65" stopColor="#989592" /><stop offset="1" stopColor="#383736" /></linearGradient>
      <linearGradient id="core1"><stop offset="0" stopColor="#6e6c66" /><stop offset="1" stopColor="#8d8a82" /></linearGradient>
      <linearGradient id="base"><stop offset="0" stopColor="#2b2b2b" /><stop offset=".15" stopColor="#2f2f2f" /><stop offset=".36" stopColor="#4b4b4b" /><stop offset=".65" stopColor="#7e7e7e" /><stop offset="1" stopColor="#919191" /></linearGradient>
      <linearGradient id="disk"><stop offset="0" stopColor="#2d2a29" /><stop offset=".3" stopColor="#4a4443" /><stop offset=".8" stopColor="#5f5755" /><stop offset="1" stopColor="#6b6361" /></linearGradient>
      <clipPath id="body"><path d="M927 370h140.500v430q-30 4-70 4t-70.500-3z" /></clipPath>
    </defs>
    {/* foundation */}
    <path d="M902.500 867v15q30 6.500 95 6.500t95-6.500v-15z" fill="url(#disk)" stroke="#111" />
    <ellipse cx="997.500" cy="868" rx="95" ry="7.500" fill="#7c7270" stroke="#111" />
    {/* basement drum */}
    <path d="M928.500 802v65q20 6 69 6t69-6v-68z" fill="url(#base)" stroke="#000" />
    <path d="M930.500 806v62M934.500 806v62M968.500 806v65M978.500 806v66M1044.500 804v67M1051.500 804v66M1066 798v70" stroke="#0c0c0c" />
    <path d="M928 834q25 3 69 4t70-4M928 835q25 3.500 69 4t70-4" stroke="#111" />
    {/* glazed storeys */}
    <g clipPath="url(#body)">
      <path d="M927 370h141v436h-141z" fill="#0b0b0b" />
      {Array.from({ length: 12 }, (_, i) => <Floor key={i} i={i} y={Math.round(383 + i * 35.050 - (i ? 0.500 : 0))} />)}
    </g>
    <path d="M939 380v422M949 380v422M952.500 380v422M970 380v422M986.700 382v420M1005.700 382v420M1024 382v420M1040 380v422M1062.700 378v422M927.500 366v437M1067.500 366v432" stroke="#000" strokeWidth="1.500" />
    {/* roof ring */}
    <path d="M927 363v13q25 5.500 70 5.500t70.500-5.500v-13z" fill="url(#rim)" stroke="#000" />
    <path d="M927 378q30 4.500 70 4.500t70-4.500" stroke="#222" strokeDasharray="7 2" />
    <ellipse cx="997" cy="362" rx="69.500" ry="5.500" fill="url(#lid)" stroke="#000" strokeWidth="1.300" />
    <path d="M984 367.500q13-4 27 0z" fill="#222" />
    {/* entrance */}
    <path d="M920 766h45v37h-45z" fill="#0d0f0f" />
    <path d="M922 767h4v34h-4z" fill="#9ba4a2" />
    <path d="M931 768h5v32h-5zM938 768h6v32h-6zM948 768h7v32h-7zM958 768h5v32h-5z" fill="#4e5857" />
    <path d="M946 780h2v20h-2zM951 768h2v32h-2z" fill="#68706f" opacity=".6" />
    <path d="M917 766h48" stroke="#000" strokeWidth="1.800" />
    <path d="M899 801.500l35-.5 38 2-5 1.500-24 1-44-2z" fill="#161616" stroke="#000" /><path d="M914 803l20-1 24 1" stroke="#7b7b7b" />
  </>
);

const LevelLines = () => levels.map(([y, name, el], i) => {
  const ry = ([1, 2, 10, 11].includes(i) ? y - 1 : y) + 0.500;
  const x0 = i === 15 ? 902 : 926;
  return (
    <g key={name} shapeRendering="crispEdges">
      <path d={`M762 ${y + .5}h14`} stroke="#000" />
      <path d={`M780 ${y + .5}H${x0}`} stroke="#000" strokeDasharray="6 4 14 4" />
      <path d={`M${i === 15 ? 1092 : 1070} ${ry}H1196`} stroke="#000" strokeDasharray="14 4 6 4" />
      <path d={`M1195.500 ${ry}l3 30`} stroke="#000" strokeDasharray="9 2 1 2 6 2" />
      <g shapeRendering="auto">
        <circle cx="758.500" cy={y + .5} r="3" fill="#fff" stroke="#0a36a0" strokeWidth="1.200" />
        <path d={`M758.500 ${y + .5}v-3a3 3 0 0 0-3 3zM758.500 ${y + .5}v3a3 3 0 0 0 3-3z`} fill="#0a36a0" />
        <text x="765" y={y - 1.500} fontSize="4.600" fill="#222">{name}</text>
        <text x="765" y={y + 4.500} fontSize="4" fill="#555">{el}</text>
      </g>
    </g>
  );
});

const ViewCube = () => (
  <>
    <defs>
      <linearGradient id="cube" x1="0" y1="0" x2="0" y2="1"><stop offset="0" stopColor="#ececec" /><stop offset="1" stopColor="#dedede" /></linearGradient>
      <radialGradient id="cubeShadow"><stop offset="0" stopColor="#000" stopOpacity=".5" /><stop offset="1" stopColor="#000" stopOpacity="0" /></radialGradient>
    </defs>
    <path fillRule="evenodd" d="M1740 365a68 10.500 0 1 0 136 0a68 10.500 0 1 0-136 0zM1757 365a52 8 0 1 0 104 0a52 8 0 1 0-104 0z" fill="#f3f3f3" stroke="#bbb" strokeDasharray="4 2" />
    <path d="M1737 362h23M1737 364h22M1861 362h15M1862 364h14" stroke="#aaa" strokeDasharray="5 1" />
    <path d="M1800 373h17M1800 376h17M1806 374l5 2" stroke="#aaa" />
    <ellipse cx="1808" cy="364" rx="40" ry="8" fill="url(#cubeShadow)" />
    <rect x="1782.500" y="311.500" width="51" height="51" fill="url(#cube)" stroke="#8b8b8b" />
    <rect x="1792" y="321" width="32" height="32" fill="#dcdfe2" />
    <text x="1790.500" y="342" fontSize="13.500" fontWeight="700" fill="#8f9499" textLength="36" lengthAdjust="spacingAndGlyphs">FRONT</text>
  </>
);

/* ---------- view controls ---------- */
const ViewControls = styled(Row)`height: 23px; background: #f0f0f0; border-bottom: 1px solid #ccc; padding: 0 0 4px 0; color: #111;`;
const Scale = styled.div`width: 91px; padding: 0 0 0 29px; letter-spacing: -0.5px;`;
const Track = styled.div`flex: 1; height: 20px; display: flex; padding-left: 529px; align-items: center; margin-top: 2px;`;
const RedX = ({ x = 9, y = 8 }) => <path d={`M${x} ${y}l8 9M${x + 8} ${y}l-8 9`} stroke="#d2261f" strokeWidth="2.400" />;
const Lamp = ({ x, y }) => <g><circle cx={x} cy={y} r="3" fill="#d8ecfb" stroke="#2d83d0" strokeWidth="1.300" /><path d={`M${x - 1} ${y + 4}h2v3h-2z`} fill="#557" /></g>;
const controls = [
  <><path d="M0 0h20v17H0z" fill="#777" stroke="#555" /><path d="M1 2h18M1 6h18M1 10h18M1 14h18" stroke="#eee" strokeWidth="2" strokeDasharray="2 2" /><path d="M3 4h16M3 8h16M3 12h16" stroke="#eee" strokeWidth="2" strokeDasharray="2 2" /></>,
  <><path d="M1 6l4-5h14v11l-4 5H1z" fill="#4f9fdc" stroke="#1d5f9c" /><path d="M1 6h14v11H1z" fill="#9bd0f2" stroke="#1d5f9c" /><path d="M3 9.500h10" stroke="#d33" strokeWidth="2" /><path d="M3 13.500h10" stroke="#3fa045" strokeWidth="2" /></>,
  <><circle cx="8" cy="8" r="4.500" fill="#ffe17a" stroke="#d99a17" strokeWidth="1.500" /><path d="M8 0v2M8 14v2M0 8h2M2 2l2 2M14 2l-2 2M2 14l2-2" stroke="#d99a17" strokeWidth="1.500" /><RedX x={10} y={8} /></>,
  <><circle cx="8" cy="6.500" r="5.500" fill="#d3e8f8" stroke="#3b7db8" strokeWidth="1.600" /><path d="M2 15h10" stroke="#555" strokeWidth="2" /><RedX x={10} /></>,
  <><path d="M4 6q-2 5 1 10h8q3-5 1-10zM4 9L0 4M7 6q0-4 4-3M14 6c4-3 6 1 4 3" fill="#eee" stroke="#777" strokeWidth="1.400" /><Lamp x={16} y={9} /></>,
  <><path d="M6 6h8v8H6z" fill="#9bc7ea" /><path d="M5 16V4h13M0 10h3M9 16V8h9M0 15h3" stroke="#2367ae" strokeWidth="1.800" /><path d="M0 12.500h4" stroke="#444" strokeDasharray="2 1" /><RedX x={10} y={7} /></>,
  <><path d="M5 16V4h13M0 10h3M9 16V8h4M0 15h3" stroke="#2367ae" strokeWidth="1.800" /><path d="M0 12.500h4" stroke="#444" strokeDasharray="2 1" /><Lamp x={16} y={8} /></>,
  <><path d="M1 8l6-7 6 1 6 7v8H5l-4-2z" fill="#e2e4e6" stroke="#4e555c" strokeWidth="1.400" /><path d="M1 8l4 1 4-6M5 9v8" stroke="#4e555c" /><path d="M10 11h8v6h-8z" fill="#bcd9cf" stroke="#2c5d55" /><path d="M12 11V8h4v2" stroke="#2c5d55" strokeWidth="1.400" /></>,
  <><circle cx="6" cy="12" r="3.500" fill="#eee" stroke="#444" strokeWidth="1.400" /><circle cx="14" cy="9" r="3.500" fill="#cfe5f7" stroke="#444" strokeWidth="1.400" /><path d="M3 10L0 3M17 7l1-6-3-1" stroke="#444" strokeWidth="1.400" /></>,
  <><circle cx="10" cy="7" r="3.500" fill="#d8ecfb" stroke="#2d83d0" strokeWidth="1.500" /><path d="M8.500 12h3v4h-3z" fill="#557" /></>,
  <><path d="M2 4h16v11H2z" fill="#eee" stroke="#333" strokeWidth="1.600" strokeDasharray="3 1" /><path d="M0 3h5M15 3h5" stroke="#333" strokeWidth="2" /><circle cx="14" cy="12" r="4" fill="#ddd" stroke="#222" strokeWidth="1.400" /><circle cx="14" cy="12" r="1" fill="#222" /></>,
  <><path d="M2 9h8v4H2z" fill="#d06a5f" /><path d="M1 4l4-3h11M1 4v13M6 4v13M1 4h10v13M11 4l4-3M1 9h10M1 13h10" stroke="#444" strokeWidth="1.400" /><Lamp x={16} y={8} /></>,
  <><path d="M1 8h8v9H1zM1 8l4-4h8v9l-4 4M9 8l4-4" fill="#ddd" stroke="#444" strokeWidth="1.300" /><path d="M7 4l3-3h9v9l-4 4" stroke="#444" strokeWidth="1.300" /><path d="M15 5v9M15 5l4-4" stroke="#444" /></>,
  <><path d="M1 0v7M18 0v7M1 3h17M1 8v9M1 16h8" stroke="#333" strokeWidth="1.300" /><path d="M11 11h8v6h-8z" fill="#777" stroke="#444" /><path d="M13 11V8h4v3" stroke="#444" strokeWidth="1.400" /></>,
];

/* ---------- status bar ---------- */
const Status = styled(Row)`height: 32px; background: #ccc; border-bottom: 2px solid #888; color: #111; letter-spacing: -0.3px; padding: 2px 0 0 2px;`;
const Message = styled.div`width: 687px; letter-spacing: -0.22px; padding-top: 1px;`;
const StatusCombo = styled(Row)`
  width: ${p => p.$w}px; height: 22px; background: #fff; color: #777; padding-left: 2px; justify-content: space-between; letter-spacing: -0.2px;
`;
const ComboEnd = styled.div`width: 22px; height: 20px; border-left: 1px solid #e4e4e4; display: grid; place-items: center;`;
const SCursor = ({ x, y }) => <path d={`M${x} ${y}v10l2.500-2 2.500 5 2-1-2.500-4.500h4z`} fill="#fff" stroke="#222" />;

export default function App() {
  return (
    <Shell>
      <Global />
      <TitleBar>
        <QuickAccess />
        <Title>Autodesk Revit 2020 - STUDENT VERSION - G Block ARCH+STRUCT - 3D View: {'{3D}'}</Title>
        <Gap $w={135} />
        <Cell $w={10}><Ico w={5} h={10}><path d="M5 0v10L0 5z" fill="#444" /></Ico></Cell>
        <Cell $w={36}><Ico w={20} h={20}><path d="M3 1h5l1 8v9H1v-8zM12 1h5l2 9v8h-8V9z" fill="#eee" stroke="#222a38" strokeWidth="1.500" /><path d="M1 11h7M12 11h7M8 6h4" stroke="#222a38" strokeWidth="2" /></Ico></Cell>
        <Cell $w={24}><Ico w={20} h={20}><path d="M10 1c4 0 5 3 4 7-.5 2-1 3-1 4 0 2 6 2 6 7H1c0-5 6-5 6-7 0-1-.5-2-1-4-1-4 0-7 4-7z" fill="#eceef2" stroke="#222a38" strokeWidth="1.300" /></Ico></Cell>
        <SignIn>Sign In</SignIn>
        <Cell $w={10} $ml={47}><Caret /></Cell>
        <Cell $w={42}><Ico w={20} h={20}><path d="M0 1h4l3 12h10M5 5h14l-2 6H6.500" fill="#dfe2ea" stroke="#1f2d5c" strokeWidth="1.600" /><circle cx="8" cy="17" r="2" fill="#eee" stroke="#1f2d5c" strokeWidth="1.400" /><circle cx="15" cy="17" r="2" fill="#eee" stroke="#1f2d5c" strokeWidth="1.400" /></Ico></Cell>
        <Cell $w={2}><VLine $h={22} /></Cell>
        <Cell $w={42}><Ico w={20} h={20}><circle cx="10" cy="10" r="9.300" fill="#f3f5f9" stroke="#222a38" strokeWidth="1.300" /><path d="M7 8c0-4 6-4 6 0 0 2-3 2-3 4.500M10 14v2.200" stroke="#2358b8" strokeWidth="2.300" /></Ico></Cell>
        <Cell $w={6}><Caret /></Cell>
        <Cell $w={10} $ml={81}><Ico w={11} h={14}><path d="M0 13h11" stroke="#fff" strokeWidth="3" /></Ico></Cell>
        <Cell $w={52}><Ico w={16} h={15}><path d="M5 4V1.500h10V9h-4M1 6h10v8H1z" stroke="#fff" strokeWidth="1.400" /><path d="M4 1.500h12M0 6.500h11" stroke="#fff" strokeWidth="2.600" /></Ico></Cell>
        <Cell $w={12}><Ico w={14} h={14}><path d="M1.500 1l11 12M12.500 1l-11 12" stroke="#fff" strokeWidth="2.800" /></Ico></Cell>
      </TitleBar>
      <Tabs>
        <Tab $w={56} $file>File</Tab>
        {TABS.map(([t, w, ls]) => <Tab key={t} $w={w} $ls={ls}>{t}</Tab>)}
        <Tab $w={70} $active>Modify</Tab>
        <Cell $w={36} $ml={19}><Ico w={19} h={11}><rect x=".7" y=".7" width="17.600" height="9.600" rx="2" fill="#e9ebf0" stroke="#3d4450" strokeWidth="1.300" /><path d="M6 7.500h7L9.500 3.500z" fill="#222" /></Ico></Cell>
        <Cell $w={2}><Caret c="#f4f4f4" /></Cell>
      </Tabs>
      <RibbonPanels />
      <OptionsBar />
      <Main>
        <SidePanels />
        <Doc>
          <DocTabs>
            <DocTab $active $g={11}><House s={19} /><span>{'{3D}'}</span><XMark /></DocTab>
            <DocTab $g={9}><Ico w={20} h={17}><path d="M1 1h11v15H1z" stroke="#8f949a" fill="#dcdcdc" /><path d="M9 2h10v14H8v-7h4V6" fill="#e6e6e6" stroke="#8f949a" strokeWidth="1.300" strokeDasharray="4 1.500" /></Ico><span>Roof</span></DocTab>
            <DocTab $g={12}><Ico w={17} h={16}><path d="M7 2l9 6-9 6zM6.500 0v16" fill="#8a8d91" stroke="#8a8d91" /><circle cx="6.500" cy="8" r="5" fill="#e6e6e6" stroke="#999" /></Ico><span>Section 1</span></DocTab>
            <TabMenu><Ico w={11} h={9}><path d="M0 1h11" stroke="#333" strokeWidth="1.600" /><path d="M0 4h11L5.500 9z" fill="#222" /></Ico></TabMenu>
          </DocTabs>
          <View>
            <Stage>
              <Scene width="1563" height="732" viewBox="336 243 1563 732" fill="none">
                <LevelLines />
                <Tower />
                <ViewCube />
              </Scene>
              <NavBar>
                <NavEnd><Ico w={9}><circle cx="4.500" cy="4.500" r="3.700" stroke="#aaa" strokeWidth="1.400" /><path d="M3 3l3 3M6 3L3 6" stroke="#aaa" /></Ico></NavEnd>
                <Arrow $h={38}><Ico w={24} h={24}><path d="M12 1h9q2 0 2 2v9A11 11 0 1 1 12 1z" fill="#e5e7ea" stroke="#92969c" strokeWidth="1.300" /><circle cx="12" cy="12" r="6" fill="#f2f2f2" stroke="#92969c" /><path d="M4 19l4-3M20 19l-4-3" stroke="#92969c" /></Ico></Arrow>
                <Caret c="#8f9499" /><NavRule />
                <Ico w={18} h={18}><path d="M1 1h12v12H1z" stroke="#9a9ea3" /><circle cx="11" cy="11" r="3.500" fill="#edf1f0" stroke="#8f9499" /><path d="M13.500 13.500l4 4" stroke="#8f9499" strokeWidth="2" /></Ico>
                <Arrow $h={20}><Caret c="#8f9499" /></Arrow>
                <NavEnd $bottom><Ico w={9} h={9}><circle cx="4.500" cy="4.500" r="3.700" stroke="#aaa" strokeWidth="1.400" /><path d="M2.500 4.500h4" stroke="#aaa" /></Ico></NavEnd>
              </NavBar>
            </Stage>
            <VScroll $w={21}><Arrow $h={26}><Chevron /></Arrow><Arrow $h={330} /><Knob $w={19} $h={21} /><Arrow $h={333} /><Arrow $h={20}><Chevron r={180} /></Arrow></VScroll>
          </View>
          <ViewControls>
            <Scale>1 : 100</Scale>
            {controls.map((c, i) => <Cell key={i} $w={24.950}><Ico w={19} h={17} vw={20} vh={18}>{c}</Ico></Cell>)}
            <Cell $w={22}><Chevron r={-90} c="#333" /></Cell>
            <Track><Knob $w={21} $h={20} /><Gap $w={534} /><Chevron r={90} /><Gap $w={15} />
              <Ico w={10} h={12}><path d="M8 0h2v2H8zM4 5h2v2H4zM8 5h2v2H8zM0 10h2v2H0zM4 10h2v2H4zM8 10h2v2H8z" fill="#aaa" /></Ico>
            </Track>
          </ViewControls>
        </Doc>
      </Main>
      <Status>
        <Message>Click to select, TAB for alternates, CTRL adds, SHIFT unselects.</Message>
        <Cell $w={20}><Ico w={20} h={20}><path d="M5 2l3-2h6v7H5z" fill="#bfe3b5" stroke="#2c8a2c" strokeWidth="1.300" /><path d="M1 9l2-2h7v11l-2 2H1z" fill="#9bcdf2" stroke="#1667b8" strokeWidth="1.400" /><path d="M1 9h7v10" stroke="#1667b8" /><path d="M12 6v5l2 2v6h3v-6l2-2V6M15.500 6v4" fill="#e8ecf5" stroke="#1e3e7d" strokeWidth="1.300" /></Ico></Cell>
        <Gap $w={8} />
        <StatusCombo $w={254}><span /><ComboEnd><Chevron r={180} c="#aaa" w={1.200} /></ComboEnd></StatusCombo>
        <Cell $w={26} $ml={5}><Ico w={17} h={20}><path d="M4 1h12v6h-5l-3 4V7H4z" fill="#d5d5d5" stroke="#999" /><path d="M0 19h9v-5l4-3M1 19l4-8 3 1v7z" fill="#999" stroke="#999" /></Ico></Cell>
        <Cell $w={12} $ml={2}>:0</Cell>
        <Gap $w={24} />
        <Ico w={19} h={19}><path d="M1 1h17v17H1z" fill="#f3f3f3" stroke="#222b38" strokeWidth="1.600" /><path d="M1 3h17" stroke="#222b38" strokeWidth="4" /><path d="M3 8h4M5 12h3M5 15h3M9.500 8h6M9.500 12h6M9.500 15h6" stroke="#222b38" strokeWidth="1.400" /></Ico>
        <Gap $w={11} />
        <Ico w={19} h={20}><path d="M2 0h17v17H9V8H2z" fill="#999" /><path d="M0 14h7m-3-4l5 4-5 4" stroke="#f3f3f3" strokeWidth="2" /></Ico>
        <Gap $w={8} />
        <StatusCombo $w={254}><span>Main Model</span><ComboEnd><Chevron r={180} c="#aaa" w={1.200} /></ComboEnd></StatusCombo>
        <Gap $w={276} />
        <Cell $w={30}><Ico w={20} h={20}><path d="M1 3h7v4H1zM8 2v10" fill="#f2c022" stroke="#b88406" strokeWidth="1.500" /><path d="M11 1l7 8M18 1l-7 8" stroke="#d0231f" strokeWidth="2.600" /><SCursor x={9} y={7} /></Ico></Cell>
        <Cell $w={30}><Ico w={20} h={20}><path d="M7 1h12l-5 5H2zM5 8h8l-3 4H1zM1 18l3-4h6v4z" fill="#dceefb" stroke="#1771c2" strokeWidth="1.300" /><SCursor x={11} y={7} /></Ico></Cell>
        <Cell $w={30}><Ico w={20} h={20}><path d="M1 1h10v4H1zM1 9h10v3H1z" fill="#f08b3f" stroke="#b94f10" strokeWidth="1.300" /><path d="M3 5h6v4H3z" fill="#f8b27c" stroke="#b94f10" /><path d="M6 12v7" stroke="#555" strokeWidth="1.500" /><SCursor x={11} y={7} /></Ico></Cell>
        <Cell $w={30}><Ico w={20} h={20}><path d="M1 5l9-4v13l-9 5z" fill="#bfe0f6" stroke="#1771c2" strokeWidth="1.500" /><path d="M11 1l7 8M18 1l-7 8" stroke="#d0231f" strokeWidth="2.600" /><SCursor x={10} y={7} /></Ico></Cell>
        <Cell $w={30}><Ico w={20} h={20}><path d="M6 0v12M0 6h12M4 2l2-2 2 2M4 10l2 2 2-2M2 4L0 6l2 2" stroke="#222" strokeWidth="1.300" /><SCursor x={11} y={7} /></Ico></Cell>
        <Cell $w={29}><Ico w={18} h={18}><circle cx="9" cy="9" r="6.500" stroke="#9d9d9d" strokeWidth="3.500" strokeDasharray="3.500 1.600" /></Ico></Cell>
        <Cell $w={27}><Ico w={20} h={20}><path d="M1 1h18v3l-7 8v7H8v-7L1 4z" fill="#9ca2ac" stroke="#3f4650" strokeWidth="1.300" /><path d="M2 2h16l-2 3H4z" fill="#dde1e8" /></Ico></Cell>
        <Cell $w={10} $ml={-2}>:0</Cell>
      </Status>
    </Shell>
  );
}
